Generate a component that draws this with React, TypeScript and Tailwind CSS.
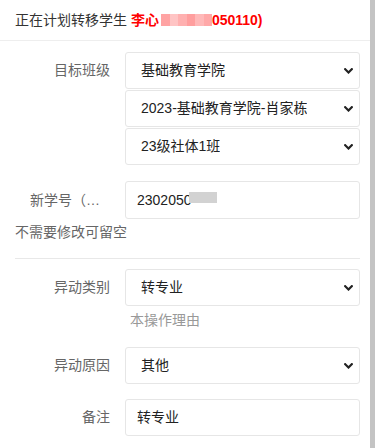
import React from "react";

function Chevron() {
  return (
    <svg
      className="w-[9px] h-[6px] text-[#222]"
      viewBox="0 0 9 6"
      fill="none"
      stroke="currentColor"
      strokeWidth="2.2"
      strokeLinecap="square"
    >
      <polyline points="1.2,1.2 4.5,4.5 7.8,1.2" />
    </svg>
  );
}

function SelectBox({ value }: { value: string }) {
  return (
    <div className="h-[37px] flex items-center justify-between border border-[#e6e6e6] rounded-[3px] bg-white pl-[15px] pr-[6px] text-[14px] text-[#222]">
      <span className="truncate">{value}</span>
      <Chevron />
    </div>
  );
}

function Label({ children }: { children: React.ReactNode }) {
  return (
    <div className="w-[80px] ml-[15px] mr-[15px] shrink-0 text-right leading-[37px] text-[14px] text-[#666] whitespace-nowrap">
      {children}
    </div>
  );
}

export default function App() {
  return (
    <div
      className="flex h-[448px] w-[375px] bg-white overflow-hidden"
      style={{ fontFamily: '"Liberation Sans", "Noto Sans CJK SC", sans-serif' }}
    >
      <div className="flex-1">
        <div className="h-[41px] border-b border-[#eeeeee] flex items-center pl-[15px] text-[14px] text-[#333]">
          <span>正在计划转移学生&nbsp;</span>
          <span className="font-bold text-[#ff0000] flex items-center">
            李心
            <span className="inline-flex h-[12px] ml-[2px]">
              <span className="w-[9px] bg-[#ffa3a3]" />
              <span className="w-[8px] bg-[#ffc4c4]" />
              <span className="w-[9px] bg-[#ffb0b0]" />
              <span className="w-[8px] bg-[#ff9e9e]" />
              <span className="w-[9px] bg-[#ffb8b8]" />
              <span className="w-[8px] bg-[#ffa8a8]" />
            </span>
            050110)
          </span>
        </div>

        <div className="pl-[15px] pr-[10px]">
          <div className="flex mt-[11px]">
            <Label>目标班级</Label>
            <div className="flex-1 flex flex-col gap-[1px]">
              <SelectBox value="基础教育学院" />
              <SelectBox value="2023-基础教育学院-肖家栋" />
              <SelectBox value="23级社体1班" />
            </div>
          </div>

          <div className="flex mt-[16px]">
            <div className="w-[80px] ml-[15px] mr-[15px] shrink-0 leading-[38px] text-[14px] text-[#666] whitespace-nowrap">
              新学号（…
            </div>
            <div className="flex-1 h-[38px] flex items-center border border-[#e6e6e6] rounded-[3px] pl-[11px] text-[14px] text-[#222]">
              2302050
              <span className="inline-block w-[28px] h-[11px] -ml-[3px] -mt-[6px] bg-[#d2d2d2]" />
            </div>
          </div>

          <div className="mt-[3px] leading-[20px] text-[14px] text-[#666]">不需要修改可留空</div>

          <div className="mt-[16px] h-px bg-[#e8e8e8]" />

          <div className="flex mt-[10px]">
            <Label>异动类别</Label>
            <div className="flex-1">
              <SelectBox value="转专业" />
            </div>
          </div>
          <div className="mt-[4px] pl-[115px] leading-[20px] text-[14px] text-[#999]">本操作理由</div>

          <div className="flex mt-[17px]">
            <Label>异动原因</Label>
            <div className="flex-1">
              <SelectBox value="其他" />
            </div>
          </div>

          <div className="flex mt-[15px]">
            <Label>备注</Label>
            <div className="flex-1 h-[37px] flex items-center border border-[#e6e6e6] rounded-[3px] pl-[11px] text-[14px] text-[#222]">
              转专业
            </div>
          </div>
        </div>
      </div>
      <div className="w-[5px] bg-[#c4c4c4]" />
    </div>
  );
}
